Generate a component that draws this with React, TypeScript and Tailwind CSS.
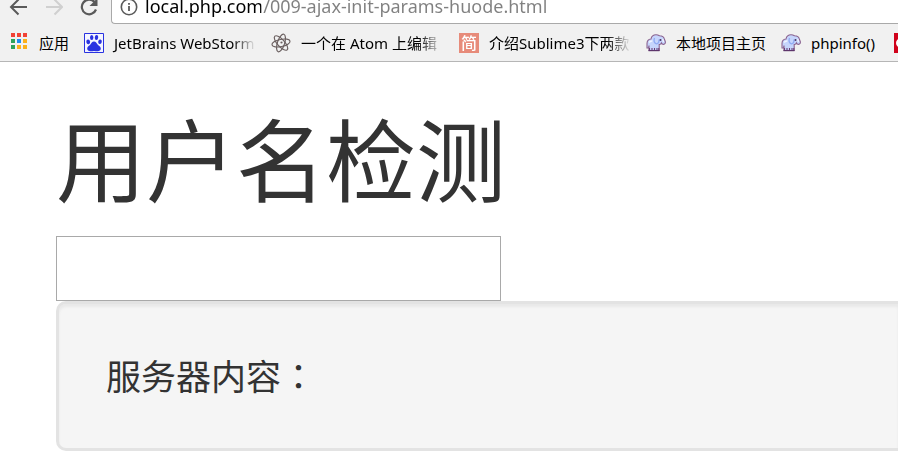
import type { ReactNode } from "react"

const GRID = ["#f14336", "#f14336", "#f14336", "#2fa25a", "#1e8ef0", "#fbb11c", "#2fa25a", "#fbb11c", "#fbb11c"]

function AppsIcon() {
  return (
    <svg width="19" height="20" viewBox="0 0 19 20">
      {GRID.map((color, i) => (
        <rect key={i} x={1 + (i % 3) * 6} y={Math.floor(i / 3) * 6} width="4" height="4" fill={color} />
      ))}
    </svg>
  )
}

function PawIcon() {
  return (
    <svg width="20" height="20" viewBox="0 0 20 20">
      <rect width="20" height="20" rx="1" fill="#2932e1" />
      <rect x="1" y="1" width="18" height="18" fill="#f4f5ff" />
      <g fill="#2932e1">
        <ellipse cx="4.2" cy="8.8" rx="1.9" ry="2.4" transform="rotate(-12 4.2 8.8)" />
        <ellipse cx="7.7" cy="4.6" rx="1.7" ry="2.5" />
        <ellipse cx="12.5" cy="4.6" rx="1.7" ry="2.5" transform="rotate(8 12.5 4.6)" />
        <ellipse cx="16" cy="8.8" rx="1.8" ry="2.3" transform="rotate(10 16 8.8)" />
        <path d="M10 8.6c2 0 2.6 1.8 3.6 2.9 1.2 1.2 3.2 2.2 3.2 4 0 1.8-1.4 2.7-3.2 2.7-1.4 0-2.3-.3-3.6-.3s-2.200.3-3.600.3c-1.800 0-3.200-.9-3.200-2.700 0-1.800 2-2.800 3.200-4 1-1.100 1.600-2.900 3.600-2.900z" />
      </g>
    </svg>
  )
}

function AtomIcon() {
  return (
    <svg width="20" height="20" viewBox="0 0 20 20" fill="none" stroke="#6b6060" strokeWidth="1.2">
      <ellipse cx="10" cy="10" rx="9.2" ry="3.6" transform="rotate(-12 10 10)" />
      <ellipse cx="10" cy="10" rx="9.2" ry="3.6" transform="rotate(48 10 10)" />
      <ellipse cx="10" cy="10" rx="9.2" ry="3.6" transform="rotate(108 10 10)" />
      <circle cx="10.5" cy="9.5" r="1.1" fill="#6b6060" stroke="none" />
    </svg>
  )
}

function JianIcon() {
  return (
    <span className="flex size-5 items-center justify-center bg-[#e78b7a] text-base leading-5 font-medium text-white">
      简
    </span>
  )
}

function ElephantIcon() {
  return (
    <svg width="20" height="18" viewBox="0 0 20 18">
      <path
        d="M1 14V9.500C1 7 2.800 5.200 5 5 5.500 2.500 7.500.8 10 .8c1.600 0 2.500.4 3.500 1 3 0 4.500 1.500 5 3.700.4 1 .9 1.800.9 2.800 0 1.400-1.200 2.300-2.500 2-1.200-.2-1.500-1.300-1.500-1.300-.5 1-1.200 1.500-2.200 1.600V16.500H3V11.500L2.500 14z"
        fill="#c6d5fc"
        stroke="#8a628f"
        strokeWidth="1.1"
      />
      <path d="M3.200 8.500c.8-1.200 2-1.600 3.200-1.500" stroke="#f3f6ff" strokeWidth="1.6" fill="none" />
      <path d="M8.500 4c-1 3-.3 5.200 1.800 5.800 2 .2 2.900-1.800 2.700-4.300" stroke="#8faaf3" strokeWidth="1.3" fill="none" />
      <path d="M3.500 14v2.500M6 14v2.500M8.500 14v2.500M11 14v2.500M12.800 14v2.500" stroke="#6a3f77" strokeWidth="1.1" />
      <path d="M2.500 16.600h11" stroke="#5d356b" strokeWidth="1.2" />
      <circle cx="14.5" cy="6" r="1" fill="#4a3566" />
      <path d="M16.700 5l.8 2.800" stroke="#f4f7ff" strokeWidth="1.2" />
    </svg>
  )
}

function RedIcon() {
  return (
    <svg width="20" height="20" viewBox="0 0 20 20">
      <rect width="20" height="20" fill="#d0021b" />
      <path d="M9 6.500H6.500a3.500 3.500 0 0 0 0 7H9" fill="none" stroke="#fff" strokeWidth="2" />
    </svg>
  )
}

type Bookmark = { label: string; icon: ReactNode; width: string; fade?: boolean }

const bookmarks: Bookmark[] = [
  { label: "应用", icon: <AppsIcon />, width: "w-[59px]" },
  { label: "JetBrains WebStorm", icon: <PawIcon />, width: "w-[172px]", fade: true },
  { label: "一个在 Atom 上编辑", icon: <AtomIcon />, width: "w-[173px]", fade: true },
  { label: "介绍Sublime3下两款", icon: <JianIcon />, width: "w-[172px]", fade: true },
  { label: "本地项目主页", icon: <ElephantIcon />, width: "w-[120px]" },
  { label: "phpinfo()", icon: <ElephantIcon />, width: "w-[98px]" },
  { label: "", icon: <RedIcon />, width: "w-5" },
]

function Toolbar() {
  return (
    <div className="-mt-4 flex h-10 items-center pt-1.5">
      <div className="flex w-[111px] shrink-0 items-center gap-[15px] pl-2">
        <button type="button" aria-label="Back">
          <svg width="20" height="20" viewBox="0 0 20 20" fill="none" stroke="#5a5a5a" strokeWidth="2">
            <path d="M19 10H4M10.500 2.500L3 10l7.500 7.500" />
          </svg>
        </button>
        <button type="button" aria-label="Forward" disabled>
          <svg width="20" height="20" viewBox="0 0 20 20" fill="none" stroke="#d0d0d0" strokeWidth="2">
            <path d="M3 10h15M11.500 2.500L19 10l-7.500 7.500" />
          </svg>
        </button>
        <button type="button" aria-label="Reload">
          <svg width="20" height="20" viewBox="0 0 20 20" fill="none" stroke="#5a5a5a" strokeWidth="2.2">
            <path d="M18 12.500A7.300 7.300 0 1 1 16.500 5" />
            <path d="M19.500 1v8h-8z" fill="#5a5a5a" stroke="none" />
          </svg>
        </button>
      </div>
      <div className="flex h-full min-w-0 flex-1 items-center gap-[7px] rounded-l border border-r-0 border-[#a9a9a9] bg-white pl-2">
        <svg className="shrink-0" width="18" height="18" viewBox="0 0 18 18" fill="none" stroke="#5a5a5a">
          <circle cx="9" cy="9" r="7.7" strokeWidth="1.6" />
          <path d="M9 8v5M9 5v1.800" strokeWidth="1.8" />
        </svg>
        <input
          aria-label="Address"
          defaultValue="local.php.com/009-ajax-init-params-huode.html"
          className="min-w-0 flex-1 bg-linear-[90deg,#000_116px,#808080_116px] bg-clip-text pb-0.5 text-lg leading-6 text-transparent caret-black outline-none"
        />
      </div>
    </div>
  )
}

export default function App() {
  return (
    <div className="overflow-hidden bg-white font-['Noto_Sans','Noto_Sans_CJK_SC',sans-serif] text-[#333]">
      <header className="border-b border-[#b6b6b6] bg-[#f1f1f1]">
        <Toolbar />
        <nav className="flex h-[37px] items-center gap-[15px] overflow-hidden pl-2.5 text-[15px] leading-5 text-black">
          {bookmarks.map((item, i) => (
            <a
              key={i}
              href="#"
              aria-label={item.label || "Bookmark"}
              className={`flex shrink-0 items-center gap-2.5 overflow-hidden whitespace-nowrap ${item.width} ${
                item.fade ? "mask-r-from-[148px] mask-r-to-[172px]" : ""
              }`}
            >
              <span className="shrink-0">{item.icon}</span>
              {item.label}
            </a>
          ))}
        </nav>
      </header>
      <main className="pt-12 pl-14">
        <h1 className="text-[90px] leading-[100px]">
          <label htmlFor="username">用户名检测</label>
        </h1>
        <input
          id="username"
          type="text"
          className="mt-[26px] block h-[65px] w-[445px] max-w-full border border-[#a9a9a9] bg-white px-2 text-4xl outline-none"
        />
        <section className="rounded-l-[10px] border-3 border-r-0 border-[#e3e3e3] bg-[#f5f5f5] px-[47px] py-[46px] text-[35px] leading-[50px] shadow-[inset_0_3px_3px_rgba(0,0,0,0.05)]">
          服务器内容
          <span className="font-['Noto_Sans_CJK_TC',sans-serif]">：</span>
        </section>
      </main>
    </div>
  )
}
